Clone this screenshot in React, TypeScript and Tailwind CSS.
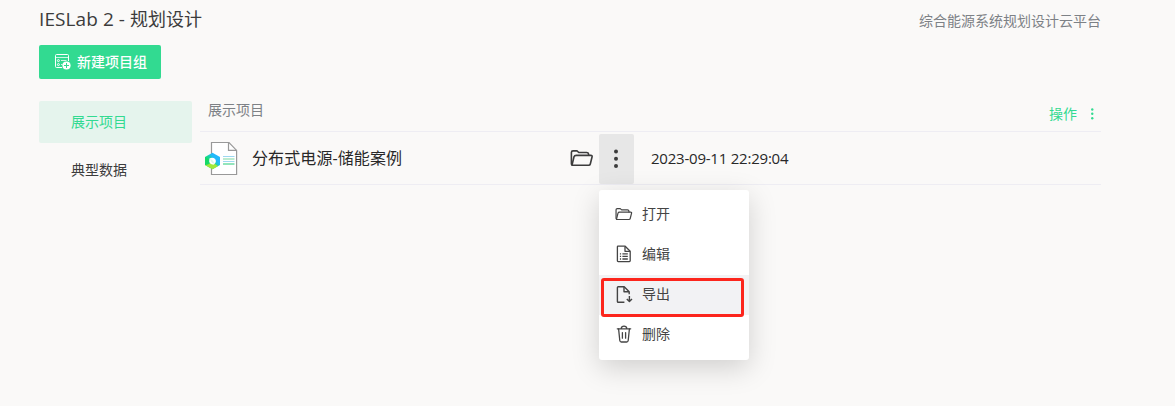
import React from "react";

type IconProps = { className?: string };

function FolderIcon({ className }: IconProps) {
  return (
    <svg viewBox="0 0 24 18" className={className} fill="none" stroke="currentColor" strokeWidth="1.6" strokeLinejoin="round" strokeLinecap="round">
      <path d="M2.2 16.2 1.4 15V3.4Q1.4 1.9 3 1.9H7L8.8 3.5H16.6Q18.4 3.5 18.6 5.2V6.3" />
      <path d="M6.2 6.4H20.8Q22.5 6.4 22.1 7.8L20.3 15Q20 16.3 18.6 16.3H2.8Q1.9 16.3 2.2 15.2L4 7.8Q4.4 6.4 6.2 6.4Z" />
    </svg>
  );
}

function EditIcon({ className }: IconProps) {
  return (
    <svg viewBox="0 0 18 18" className={className} fill="none" stroke="currentColor" strokeWidth="1.3" strokeLinejoin="round">
      <path d="M3 1.2H10.2L15.2 6.2V15.8Q15.2 16.6 14.4 16.6H3.2Q2.4 16.6 2.4 15.8V1.8Q2.4 1.2 3 1.2Z" />
      <path d="M10 1.4V6.3H15" />
      <path d="M4.9 8.8H6.1M7.4 8.8H12.8M4.9 11.4H6.1M7.4 11.4H12.8M4.9 14H6.1M7.4 14H12.8" />
    </svg>
  );
}

function ExportIcon({ className }: IconProps) {
  return (
    <svg viewBox="0 0 18 18" className={className} fill="none" stroke="currentColor" strokeWidth="1.4" strokeLinejoin="round">
      <path d="M9.4 16.8H3.2Q2.4 16.8 2.4 16V2Q2.4 1.2 3.2 1.2H9.2L14.2 6.2V8.8" />
      <path d="M9 1.4V6.3H14" />
      <path d="M14.4 10.4V16M11.8 13.4 14.4 16.1 17 13.4" />
    </svg>
  );
}

function TrashIcon({ className }: IconProps) {
  return (
    <svg viewBox="0 0 18 18" className={className} fill="none" stroke="currentColor" strokeWidth="1.3" strokeLinejoin="round" strokeLinecap="round">
      <path d="M2.3 3.8H15.7M6.2 3.5Q6.5 1.2 9 1.2T11.8 3.5" />
      <path d="M3.6 4 4.8 15.5Q5 17 6.3 17H11.7Q13 17 13.2 15.5L14.4 4M7.4 7.6V13.2M10.6 7.6V13.2" />
    </svg>
  );
}

function NewGroupIcon({ className }: IconProps) {
  return (
    <svg viewBox="0 0 16 16" className={className} fill="none" stroke="currentColor" strokeWidth="1">
      <path d="M7 13.5H1.5Q.5 13.5 .5 12.5V1.5Q.5.5 1.5.5H12.5Q13.5.5 13.5 1.5V7" />
      <path d="M1 3.5H13M6 6.5H11.5M6 10.5H7.5" strokeOpacity=".75" />
      <circle cx="3.4" cy="6.6" r="1" />
      <circle cx="3.4" cy="10.6" r="1" />
      <circle cx="11.5" cy="11.5" r="4.1" fill="currentColor" stroke="none" />
      <path d="M11.5 9V14M9 11.5H14" className="stroke-[#32da91]" />
    </svg>
  );
}

function ProjectIcon() {
  return (
    <svg viewBox="0 0 34 36" className="relative top-px h-9 w-[34px]" fill="none">
      <defs>
        <linearGradient id="hexagon" x1="0" y1="1" x2="1" y2="0">
          <stop offset="0" stopColor="#16d863" />
          <stop offset=".48" stopColor="#16d991" />
          <stop offset=".65" stopColor="#22b9fb" />
        </linearGradient>
      </defs>
      <path d="M6.5 1.5H24L31.6 9.4V33.5H6.5Z" fill="#fff" stroke="#999" strokeWidth="1.2" />
      <path d="M23.5 1.5V9.4H31.6" stroke="#999" strokeWidth="1.2" />
      <path d="M18 15.5H29.5" stroke="#9dd8f1" />
      <path d="M18 18H29.5" stroke="#bcebcf" strokeWidth="2" />
      <path d="M18 20.5H29.5" stroke="#a0d9f0" />
      <path d="M18 23H29.5" stroke="#57d797" strokeWidth="1.3" />
      <path d="M7.5 11.8 15 16V24L7.5 28.2 0 24V16Z" fill="url(#hexagon)" />
      <path d="M0 24 7.5 21.5 13 25.1 7.5 28.2Z" fill="#a0e83a" />
      <path d="M0 16 3.8 18.2V23.2L0 24Z" fill="#16d966" />
      <path d="M4.4 17.6Q7.5 15.6 10.2 18Q11.6 20 10.4 22L8.5 23.8Q5.2 23.6 4.2 21Z" fill="#fff" />
      <path d="M5.2 18Q9 19.4 9.2 22.8Q6 22 5.2 18Z" fill="#d9f8ea" />
    </svg>
  );
}

function Dots({ className }: IconProps) {
  return (
    <svg viewBox="0 0 4 20" className={className} fill="currentColor">
      <circle cx="2" cy="2.4" r="2" />
      <circle cx="2" cy="9.7" r="2" />
      <circle cx="2" cy="17" r="2" />
    </svg>
  );
}

const menuItems = [
  { label: "打开", Icon: FolderIcon, size: "h-[14px] w-[18px]" },
  { label: "编辑", Icon: EditIcon, size: "h-[18px] w-[18px]" },
  { label: "导出", Icon: ExportIcon, size: "h-[19px] w-[18px]" },
  { label: "删除", Icon: TrashIcon, size: "h-[18px] w-[18px]" },
];

function ContextMenu() {
  return (
    <div className="absolute left-0 top-14 z-10 h-[170px] w-[150px] rounded-[3px] bg-white py-[5px] shadow-[0_8px_28px_rgba(0,0,0,0.17)]">
      {menuItems.map(({ label, Icon, size }) => (
        <button key={label} className={`flex h-10 w-full items-center pb-0.5 pl-4 text-left text-sm text-[#444] ${label === "导出" ? "bg-[#f2f2f4]" : ""}`}>
          <span className="flex w-[27px] items-center">
            <Icon className={size} />
          </span>
          <span>{label}</span>
        </button>
      ))}
      <div className="pointer-events-none absolute left-[1.5px] top-[87.5px] h-[39px] w-[143px] rounded-[3px] border-3 border-[#fc251c]" />
    </div>
  );
}

export default function App() {
  return (
    <div className="h-[406px] overflow-hidden bg-[#faf9f8] pl-[39px] pr-[74px] font-['Open_Sans','Noto_Sans_CJK_SC',sans-serif] text-[#3c3c3c]">
      <header className="flex h-[45px] items-start justify-between pt-1.5">
        <h1 className="whitespace-pre text-[18px] leading-[27px]">
          <span className="text-[19px] tracking-[0.08px]">IESLab 2 - </span>规划设计
        </h1>
        <span className="pt-1 text-sm leading-[22px] text-[#7d8186]">综合能源系统规划设计云平台</span>
      </header>
      <button className="flex h-[34px] w-[122px] items-center rounded-[2px] bg-[#32da91] pl-4 text-sm font-medium text-white">
        <NewGroupIcon className="mr-1.5 h-4 w-4" />
        <span>新建项目组</span>
      </button>
      <div className="mt-[22px] flex">
        <nav className="w-[153px] shrink-0 text-sm">
          <div className="flex h-[42px] items-center rounded-[2px] bg-[#e5f4ed] pl-8 text-[#32da91]">展示项目</div>
          <div className="mt-[6px] flex h-[42px] items-center pl-8">典型数据</div>
        </nav>
        <main className="ml-2 w-[901px] shrink-0">
          <div className="flex h-[31px] items-start justify-between border-b border-[#eeedf3] pl-2 text-sm">
            <span className="-mt-px leading-5 text-[#7d8186]">展示项目</span>
            <div className="flex items-center pr-[7.5px] pt-[3px] leading-5 text-[#32da91]">
              <span>操作</span>
              <Dots className="ml-3.5 h-3 w-[2.5px]" />
            </div>
          </div>
          <div className="flex h-[53px] items-center border-b border-[#eeedf3] pl-[5px]">
            <ProjectIcon />
            <span className="ml-[13px] w-[318px] text-[16px] leading-6 tracking-[0.1px] text-[#282828]">分布式电源-储能案例</span>
            <FolderIcon className="h-[18px] w-6 shrink-0" />
            <div className="relative ml-[5px] flex h-[50px] w-[35px] items-center justify-center self-end rounded-[2px] bg-[#e7e7e7] pr-px">
              <Dots className="h-5 w-1" />
              <ContextMenu />
            </div>
            <time className="ml-[17px] whitespace-nowrap text-[15px] tracking-[-0.22px] text-[#282828]">2023-09-11 22:29:04</time>
          </div>
        </main>
      </div>
    </div>
  );
}
